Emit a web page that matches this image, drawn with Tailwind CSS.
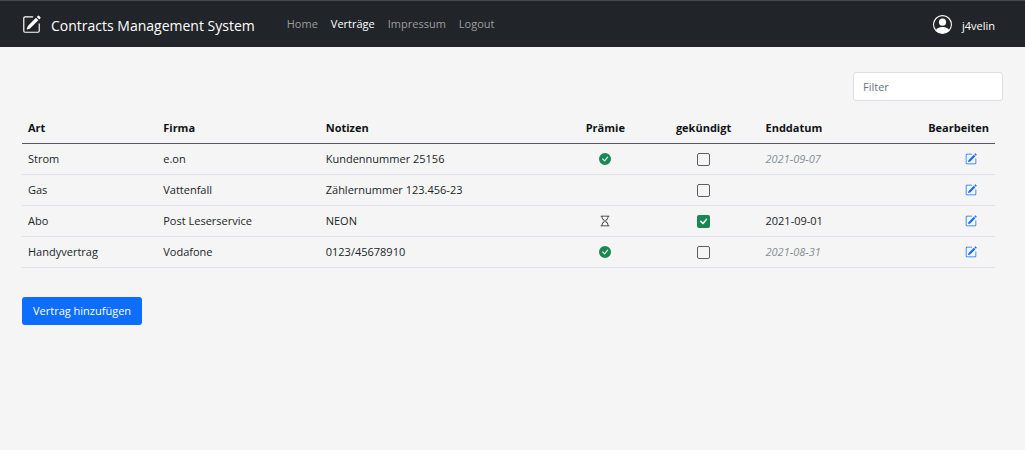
<!DOCTYPE html>
<html lang="de">
<head>
<meta charset="utf-8">
<meta name="viewport" content="width=device-width, initial-scale=1">
<title>Contracts Management System</title>
<script src="https://cdn.jsdelivr.net/npm/@tailwindcss/browser@4"></script>
</head>
<body class="min-h-screen bg-[#f5f5f5] font-['Open_Sans','Noto_Sans',sans-serif] text-[11px] leading-[18px] text-[#212529]">
<svg class="hidden" aria-hidden="true">
  <symbol id="pencil" viewBox="0 0 16 16">
    <path d="M15.502 1.94a.5.5 0 0 1 0 .706L14.459 3.69l-2-2L13.502.646a.5.5 0 0 1 .707 0l1.293 1.293zm-1.75 2.456-2-2L4.939 9.21a.5.5 0 0 0-.121.196l-.805 2.414a.25.25 0 0 0 .316.316l2.414-.805a.5.5 0 0 0 .196-.12l6.813-6.814z"/>
    <path fill-rule="evenodd" d="M1 13.5A1.5 1.5 0 0 0 2.5 15h11a1.5 1.5 0 0 0 1.5-1.5v-6a.5.5 0 0 0-1 0v6a.5.5 0 0 1-.5.5h-11a.5.5 0 0 1-.5-.5v-11a.5.5 0 0 1 .5-.5H9a.5.5 0 0 0 0-1H2.5A1.5 1.5 0 0 0 1 2.5v11z"/>
  </symbol>
  <symbol id="person" viewBox="0 0 16 16">
    <path d="M11 6a3 3 0 1 1-6 0 3 3 0 0 1 6 0z"/>
    <path fill-rule="evenodd" d="M0 8a8 8 0 1 1 16 0A8 8 0 0 1 0 8zm8-7a7 7 0 0 0-5.468 11.37C3.242 11.226 4.805 10 8 10s4.757 1.225 5.468 2.37A7 7 0 0 0 8 1z"/>
  </symbol>
  <symbol id="check" viewBox="0 0 16 16">
    <path d="M16 8A8 8 0 1 1 0 8a8 8 0 0 1 16 0zm-3.97-3.03a.75.75 0 0 0-1.08.022L7.477 9.417 5.384 7.323a.75.75 0 0 0-1.06 1.06L6.97 11.03a.75.75 0 0 0 1.079-.02l3.992-4.99a.75.75 0 0 0-.01-1.05z"/>
  </symbol>
  <symbol id="hourglass" viewBox="0 0 16 16">
    <path d="M2 1.5a.5.5 0 0 1 .5-.5h11a.5.5 0 0 1 0 1h-1v1a4.5 4.5 0 0 1-2.557 4.06c-.29.139-.443.377-.443.59v.7c0 .213.154.451.443.59A4.5 4.5 0 0 1 12.5 13v1h1a.5.5 0 0 1 0 1h-11a.5.5 0 1 1 0-1h1v-1a4.5 4.5 0 0 1 2.557-4.06c.29-.139.443-.377.443-.59v-.7c0-.213-.154-.451-.443-.59A4.5 4.5 0 0 1 3.5 3V2h-1a.5.5 0 0 1-.5-.5zm2.5.5v1a3.5 3.5 0 0 0 1.989 3.158c.533.256 1.011.791 1.011 1.491v.702c0 .7-.478 1.235-1.011 1.491A3.5 3.5 0 0 0 4.5 13v1h7v-1a3.5 3.5 0 0 0-1.989-3.158C8.978 9.586 8.5 9.052 8.5 8.351v-.702c0-.7.478-1.235 1.011-1.491A3.5 3.5 0 0 0 11.5 3V2h-7z"/>
  </symbol>
</svg>

<header class="flex items-center border-t border-[#454a4e] bg-[#212529] py-2.5 pr-[30px] pl-[22px]">
  <a href="#" class="flex items-center gap-2.5 text-sm leading-[22px] text-white">
    <svg class="size-[19px] fill-current" aria-hidden="true"><use href="#pencil"/></svg>
    <span class="pt-1">Contracts Management System</span>
  </a>
  <nav class="ml-8 flex gap-[13px] text-[#9b9d9f]">
    <a href="#">Home</a>
    <a href="#" aria-current="page" class="text-white">Verträge</a>
    <a href="#">Impressum</a>
    <a href="#">Logout</a>
  </nav>
  <a href="#" class="ml-auto flex items-center gap-2.5 text-white">
    <svg class="size-[19px] fill-current" aria-hidden="true"><use href="#person"/></svg>
    <span class="pt-1">j4velin</span>
  </a>
</header>

<main class="pt-[25px] pr-[30px] pl-[22px]">
  <div class="-mr-2 flex justify-end">
    <input type="text" aria-label="Filter" placeholder="Filter" class="h-[29px] w-[150px] rounded-[3px] border border-[#dcdfe4] bg-white px-[9px] placeholder:text-[#6c757d]">
  </div>

  <table class="mt-3 w-full table-fixed border-collapse text-left">
    <colgroup>
      <col class="w-[13.9%]"><col class="w-[16.7%]"><col class="w-[25%]"><col class="w-[8.7%]"><col class="w-[11.5%]"><col class="w-[12.2%]"><col class="w-[12%]">
    </colgroup>
    <thead>
      <tr class="border-b border-[#55585c] text-[#111417] *:px-1.5 *:py-1.5 *:font-bold">
        <th scope="col">Art</th><th scope="col">Firma</th><th scope="col">Notizen</th>
        <th scope="col" class="text-center">Prämie</th><th scope="col" class="text-center">gekündigt</th>
        <th scope="col">Enddatum</th><th scope="col" class="text-right">Bearbeiten</th>
      </tr>
    </thead>
    <tbody class="[&_td]:px-1.5 [&_td]:py-1.5 [&_tr]:border-b [&_tr]:border-[#dfe2e6]">
      <tr>
        <td>Strom</td><td>e.on</td><td>Kundennummer 25156</td>
        <td><svg class="mx-auto size-3 fill-[#198754]" role="img" aria-label="Ja"><use href="#check"/></svg></td>
        <td><input type="checkbox" aria-label="Strom gekündigt" class="mx-auto block size-[13px] appearance-none rounded-xs border border-[#5b5f63]"></td>
        <td class="text-[#868e96] italic">2021-09-07</td>
        <td><a href="#" aria-label="Strom bearbeiten" class="mr-3 flex justify-end text-[#0d6efd]"><svg class="size-3 fill-current" aria-hidden="true"><use href="#pencil"/></svg></a></td>
      </tr>
      <tr>
        <td>Gas</td><td>Vattenfall</td><td>Zählernummer 123.456-23</td>
        <td></td>
        <td><input type="checkbox" aria-label="Gas gekündigt" class="mx-auto block size-[13px] appearance-none rounded-xs border border-[#5b5f63]"></td>
        <td></td>
        <td><a href="#" aria-label="Gas bearbeiten" class="mr-3 flex justify-end text-[#0d6efd]"><svg class="size-3 fill-current" aria-hidden="true"><use href="#pencil"/></svg></a></td>
      </tr>
      <tr>
        <td>Abo</td><td>Post Leserservice</td><td>NEON</td>
        <td><svg class="mx-auto size-3 fill-[#212529]" role="img" aria-label="Ausstehend"><use href="#hourglass"/></svg></td>
        <td>
          <div class="grid justify-center *:[grid-area:1/1]">
            <input type="checkbox" checked aria-label="Abo gekündigt" class="size-[13px] appearance-none rounded-xs bg-[#198754]">
            <svg class="pointer-events-none size-[13px] fill-none stroke-white stroke-2" viewBox="0 0 16 16" stroke-linecap="round" stroke-linejoin="round" aria-hidden="true"><path d="M4.7 7.8 7.4 10.5 11.5 5.5"/></svg>
          </div>
        </td>
        <td>2021-09-01</td>
        <td><a href="#" aria-label="Abo bearbeiten" class="mr-3 flex justify-end text-[#0d6efd]"><svg class="size-3 fill-current" aria-hidden="true"><use href="#pencil"/></svg></a></td>
      </tr>
      <tr>
        <td>Handyvertrag</td><td>Vodafone</td><td>0123/45678910</td>
        <td><svg class="mx-auto size-3 fill-[#198754]" role="img" aria-label="Ja"><use href="#check"/></svg></td>
        <td><input type="checkbox" aria-label="Handyvertrag gekündigt" class="mx-auto block size-[13px] appearance-none rounded-xs border border-[#5b5f63]"></td>
        <td class="text-[#868e96] italic">2021-08-31</td>
        <td><a href="#" aria-label="Handyvertrag bearbeiten" class="mr-3 flex justify-end text-[#0d6efd]"><svg class="size-3 fill-current" aria-hidden="true"><use href="#pencil"/></svg></a></td>
      </tr>
    </tbody>
  </table>

  <button type="button" class="mt-[29px] rounded-[3px] bg-[#0d6efd] px-[11px] py-[5px] text-white">Vertrag hinzufügen</button>
</main>
</body>
</html>
